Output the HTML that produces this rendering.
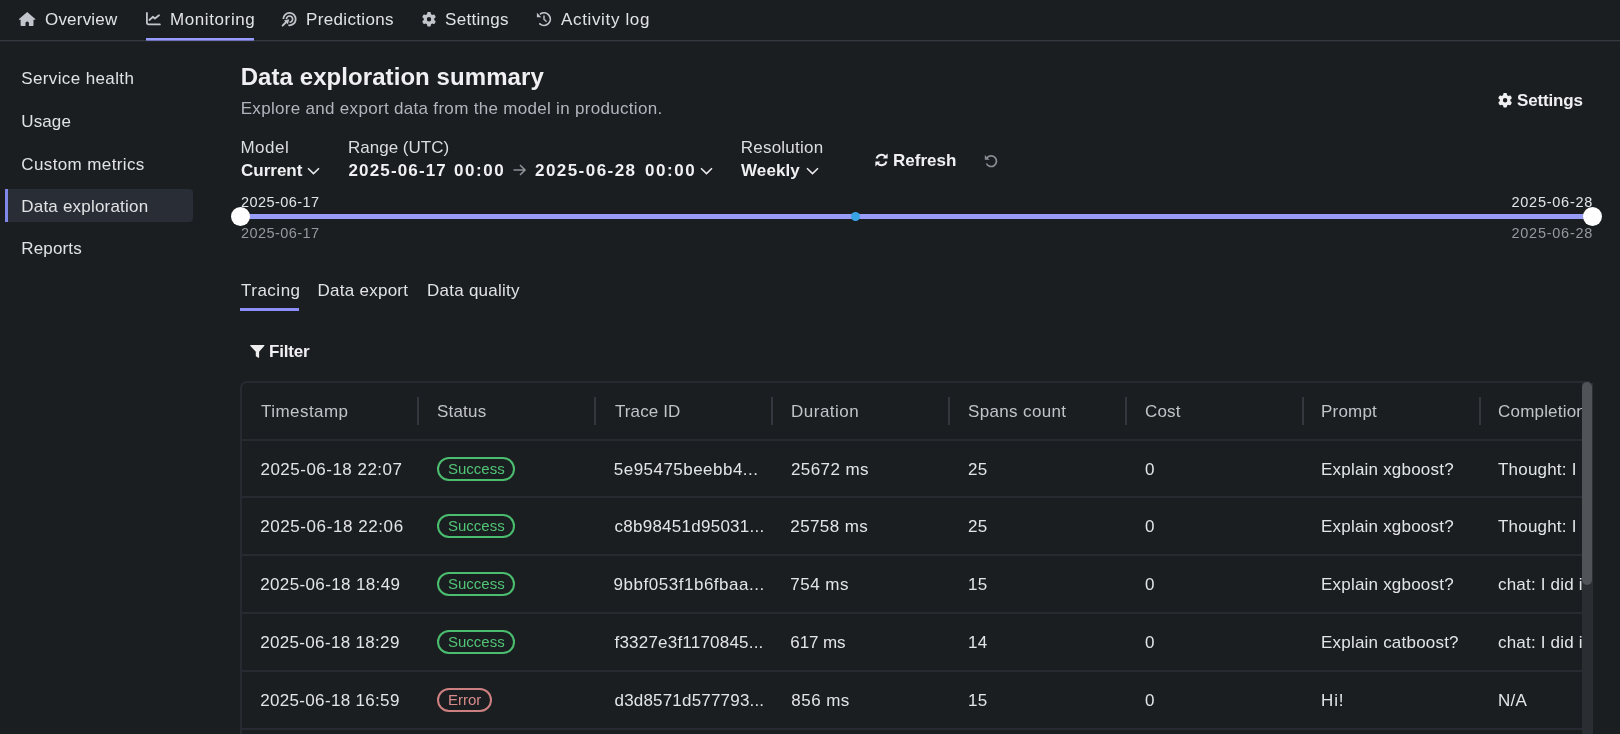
<!DOCTYPE html>
<html><head><meta charset="utf-8">
<style>
*{box-sizing:border-box;margin:0;padding:0}
html,body{width:1620px;height:734px;overflow:hidden;background:#1a1e21;font-family:"Liberation Sans",sans-serif;color:#e6e6e6}
#root{position:absolute;left:0;top:0;width:1620px;height:734px;will-change:transform}
.a{position:absolute;white-space:nowrap;font-size:17px;line-height:20px}
.b{font-weight:700;color:#f0f0f2}
.ic{position:absolute;overflow:visible}
.nt{color:#e1e2e4}
.side{color:#e1e2e4}
.sub{color:#b1b5bd}
.lbl{color:#dcdde0}
.sm{font-size:14.5px;line-height:16px}
.th{color:#c1c3c7}
.td{color:#e3e4e6}
.sep{position:absolute;width:1.5px;height:28px;background:#34383e;top:397px}
.rl{position:absolute;left:241px;width:1341px;height:2px;background:#272b31}
.badge{position:absolute;left:437px;height:24px;border:2px solid #4bbd6e;border-radius:12px;color:#52c476;font-size:15px;line-height:20px;padding:0 0 0 9px;white-space:nowrap}
.badge.err{border-color:#cd8080;color:#d98b8b}
</style></head><body><div id="root">

<div style="position:absolute;left:0;top:40px;width:1620px;height:1px;background:#363a40"></div>
<div style="position:absolute;left:0;top:41px;width:1620px;height:1px;background:#22262b"></div>
<div style="position:absolute;left:146px;top:38px;width:108px;height:2px;background:#979cfb"></div>
<div style="position:absolute;left:146px;top:40px;width:108px;height:1px;background:#6c70b8"></div>
<svg class="ic" style="left:14px;top:8px" width="26" height="22" viewBox="0 0 26 22"><path d="M13.2 3.9 L21.3 11.0 Q21.7 11.6 21.1 11.7 L19.5 11.7 L19.5 17.3 Q19.5 18 18.8 18 L14.9 18 L14.9 15.1 Q14.9 13.4 13.2 13.4 Q11.5 13.4 11.5 15.1 L11.5 18 L7.3 18 Q6.6 18 6.6 17.3 L6.6 11.7 L5.2 11.7 Q4.6 11.6 5.0 11.0 Z" fill="#c2c5cb"/></svg>
<div id="t1" class="a nt" style="left:45px;top:10px;letter-spacing:0.2px;">Overview</div>
<svg class="ic" style="left:142px;top:8px" width="24" height="22" viewBox="0 0 24 22"><path d="M4.9 4.9 V14.6 Q4.9 16.4 6.7 16.4 H17.9" stroke="#c2c5cb" stroke-width="1.8" fill="none" stroke-linecap="round"/><path d="M7.4 12 L10.8 8.8 L12.9 10.5 L17 7.3" stroke="#c2c5cb" stroke-width="1.8" fill="none" stroke-linecap="round" stroke-linejoin="round"/></svg>
<div id="t2" class="a nt" style="left:170px;top:10px;letter-spacing:0.6px;">Monitoring</div>
<svg class="ic" style="left:278px;top:8px" width="22" height="22" viewBox="0 0 22 22"><path d="M5.3 11.1 A6.2 6.2 0 1 1 10.4 17.2" stroke="#c2c5cb" stroke-width="1.8" fill="none"/><path d="M8.45 11.2 A3.1 3.1 0 1 1 11.6 14.2" stroke="#c2c5cb" stroke-width="1.7" fill="none"/><path d="M11.3 11.2 L5.9 12.4 L9.9 16.3 Z" fill="#c2c5cb"/><path d="M8.2 14 L4.6 17.6" stroke="#c2c5cb" stroke-width="1.9" stroke-linecap="round"/></svg>
<div id="t3" class="a nt" style="left:306px;top:10px;letter-spacing:0.35px;">Predictions</div>
<svg class="ic" style="left:421.5px;top:11.8px" width="14" height="14.5" viewBox="0 0 512 512" preserveAspectRatio="none"><path fill="#c2c5cb" d="M495.9 166.6c3.2 8.7.5 18.4-6.4 24.6l-43.3 39.4c1.1 8.3 1.7 16.8 1.7 25.4s-.6 17.1-1.7 25.4l43.3 39.4c6.9 6.2 9.6 15.9 6.4 24.6c-4.4 11.9-9.7 23.3-15.8 34.3l-4.7 8.1c-6.6 11-14 21.4-22.1 31.2c-5.9 7.2-15.7 9.6-24.5 6.8l-55.7-17.7c-13.4 10.3-28.2 18.9-44 25.4l-12.5 57.1c-2 9.1-9 16.3-18.2 17.8c-13.8 2.3-28 3.5-42.5 3.5s-28.7-1.2-42.5-3.5c-9.2-1.5-16.2-8.700-18.2-17.8l-12.5-57.1c-15.8-6.5-30.6-15.1-44-25.4L83.1 425.9c-8.8 2.8-18.6.3-24.5-6.8c-8.1-9.8-15.5-20.2-22.1-31.2l-4.7-8.1c-6.1-11-11.4-22.4-15.8-34.3c-3.2-8.7-.5-18.4 6.4-24.6l43.3-39.4C64.6 273.1 64 264.6 64 256s.6-17.1 1.7-25.4L22.4 191.2c-6.9-6.2-9.6-15.9-6.4-24.6c4.4-11.9 9.7-23.3 15.8-34.3l4.7-8.1c6.6-11 14-21.4 22.1-31.2c5.9-7.2 15.7-9.6 24.5-6.8l55.7 17.7c13.4-10.3 28.2-18.9 44-25.4l12.5-57.1c2-9.1 9-16.3 18.2-17.8C227.3 1.2 241.5 0 256 0s28.7 1.2 42.5 3.5c9.2 1.5 16.2 8.7 18.2 17.8l12.5 57.1c15.8 6.5 30.6 15.1 44 25.4l55.7-17.7c8.8-2.8 18.6-.3 24.5 6.8c8.1 9.8 15.5 20.2 22.1 31.2l4.7 8.1c6.1 11 11.4 22.4 15.8 34.3zM256 336a80 80 0 1 0 0-160 80 80 0 1 0 0 160z"/></svg>
<div id="t4" class="a nt" style="left:445px;top:10px;letter-spacing:0.3px;">Settings</div>
<svg class="ic" style="left:532px;top:8px" width="24" height="22" viewBox="0 0 24 22"><path d="M8.57 5.82 A6.3 6.3 0 1 1 7.87 15.85" stroke="#c2c5cb" stroke-width="1.8" fill="none" stroke-linecap="round"/><path d="M4.9 4.8 L4.9 9.2 L9.3 9.2 Z" fill="#c2c5cb"/><path d="M12 8 V11.2 L14.1 13.3" stroke="#aeb2b9" stroke-width="1.6" fill="none" stroke-linecap="round"/></svg>
<div id="t5" class="a nt" style="left:561px;top:10px;letter-spacing:0.65px;">Activity log</div>
<div style="position:absolute;left:5px;top:189px;width:188px;height:33px;background:#292d35;border-radius:0 4px 4px 0"></div>
<div style="position:absolute;left:5px;top:189px;width:3px;height:33px;background:#8088ea"></div>
<div id="t6" class="a side" style="left:21.2px;top:69px;letter-spacing:0.38px;">Service health</div>
<div id="t7" class="a side" style="left:21.3px;top:112px;letter-spacing:0.1px;">Usage</div>
<div id="t8" class="a side" style="left:21.3px;top:155px;letter-spacing:0.38px;">Custom metrics</div>
<div id="t9" class="a side" style="left:21.3px;top:197px;letter-spacing:0.2px;">Data exploration</div>
<div id="t10" class="a side" style="left:21.3px;top:239px;letter-spacing:0.15px;">Reports</div>
<div id="t11" class="a b" style="left:240.7px;top:63px;letter-spacing:0.07px;font-size:24px;line-height:28px">Data exploration summary</div>
<div id="t12" class="a sub" style="left:240.7px;top:99px;letter-spacing:0.31px;">Explore and export data from the model in production.</div>
<svg class="ic" style="left:1498px;top:92.7px" width="14.2" height="14.6" viewBox="0 0 512 512" preserveAspectRatio="none"><path fill="#f0f0f2" d="M495.9 166.6c3.2 8.7.5 18.4-6.4 24.6l-43.3 39.4c1.1 8.3 1.7 16.8 1.7 25.4s-.6 17.1-1.7 25.4l43.3 39.4c6.9 6.2 9.6 15.9 6.4 24.6c-4.4 11.9-9.7 23.3-15.8 34.3l-4.7 8.1c-6.6 11-14 21.4-22.1 31.2c-5.9 7.2-15.7 9.6-24.5 6.8l-55.7-17.7c-13.4 10.3-28.2 18.9-44 25.4l-12.5 57.1c-2 9.1-9 16.3-18.2 17.8c-13.8 2.3-28 3.5-42.5 3.5s-28.7-1.2-42.5-3.5c-9.2-1.5-16.2-8.700-18.2-17.8l-12.5-57.1c-15.8-6.5-30.6-15.1-44-25.4L83.1 425.9c-8.8 2.8-18.6.3-24.5-6.8c-8.1-9.8-15.5-20.2-22.1-31.2l-4.7-8.1c-6.1-11-11.4-22.4-15.8-34.3c-3.2-8.7-.5-18.4 6.4-24.6l43.3-39.4C64.6 273.1 64 264.6 64 256s.6-17.1 1.7-25.4L22.4 191.2c-6.9-6.2-9.6-15.9-6.4-24.6c4.4-11.9 9.7-23.3 15.8-34.3l4.7-8.1c6.6-11 14-21.4 22.1-31.2c5.9-7.2 15.7-9.6 24.5-6.8l55.7 17.7c13.4-10.3 28.2-18.9 44-25.4l12.5-57.1c2-9.1 9-16.3 18.2-17.8C227.3 1.2 241.5 0 256 0s28.7 1.2 42.5 3.5c9.2 1.5 16.2 8.7 18.2 17.8l12.5 57.1c15.8 6.5 30.6 15.1 44 25.4l55.7-17.7c8.8-2.8 18.6-.3 24.5 6.8c8.1 9.8 15.5 20.2 22.1 31.2l4.7 8.1c6.1 11 11.4 22.4 15.8 34.3zM256 336a80 80 0 1 0 0-160 80 80 0 1 0 0 160z"/></svg>
<div id="t13" class="a b" style="left:1517px;top:91px;letter-spacing:-0.15px;">Settings</div>
<div id="t14" class="a lbl" style="left:240.4px;top:138px;letter-spacing:0.55px;">Model</div>
<div id="t15" class="a b" style="left:241px;top:161px;letter-spacing:0px;">Current</div>
<svg class="ic" style="left:307px;top:167px" width="13" height="8" viewBox="0 0 13 8"><path d="M1 1.2 L6.5 6.6 L12 1.2" stroke="#ececee" stroke-width="1.5" fill="none"/></svg>
<div id="t16" class="a lbl" style="left:348px;top:138px;letter-spacing:0px;">Range (UTC)</div>
<div id="t17" class="a b" style="left:348.5px;top:161px;letter-spacing:1.15px;">2025-06-17</div>
<div id="t18" class="a b" style="left:454px;top:161px;letter-spacing:1.55px;">00:00</div>
<svg class="ic" style="left:513px;top:164px" width="13" height="12" viewBox="0 0 13 12"><path d="M0.5 6 H12 M7 1 L12 6 L7 11" stroke="#8c9097" stroke-width="1.6" fill="none"/></svg>
<div id="t19" class="a b" style="left:535px;top:161px;letter-spacing:1.45px;">2025-06-28</div>
<div id="t20" class="a b" style="left:645px;top:161px;letter-spacing:1.55px;">00:00</div>
<svg class="ic" style="left:700px;top:167px" width="13" height="8" viewBox="0 0 13 8"><path d="M1 1.2 L6.5 6.6 L12 1.2" stroke="#ececee" stroke-width="1.5" fill="none"/></svg>
<div id="t21" class="a lbl" style="left:740.8px;top:138px;letter-spacing:0.22px;">Resolution</div>
<div id="t22" class="a b" style="left:741px;top:161px;letter-spacing:0.1px;">Weekly</div>
<svg class="ic" style="left:806px;top:167px" width="13" height="8" viewBox="0 0 13 8"><path d="M1 1.2 L6.5 6.6 L12 1.2" stroke="#ececee" stroke-width="1.5" fill="none"/></svg>
<svg class="ic" style="left:874px;top:153px" width="15" height="14" viewBox="0 0 15 14"><path d="M2.6 5.6 A5 5 0 0 1 11.3 3.6" stroke="#f0f0f2" stroke-width="2" fill="none"/><path d="M13.6 0.6 V5.6 H8.6 Z" fill="#f0f0f2"/><path d="M12.4 8.4 A5 5 0 0 1 3.7 10.4" stroke="#f0f0f2" stroke-width="2" fill="none"/><path d="M1.4 13.4 V8.4 H6.4 Z" fill="#f0f0f2"/></svg>
<div id="t23" class="a b" style="left:893px;top:151px;letter-spacing:0.0px;">Refresh</div>
<svg class="ic" style="left:984px;top:154px" width="14" height="14" viewBox="0 0 14 14"><path d="M2.8 4.2 A5.3 5.3 0 1 1 2.4 9.5" stroke="#8a8e95" stroke-width="1.7" fill="none"/><path d="M0.8 1 V5.8 H5.6 Z" fill="#8a8e95"/></svg>
<div style="position:absolute;left:240px;top:214px;width:1353px;height:5px;background:#979cf6"></div>
<div style="position:absolute;left:231px;top:207px;width:19px;height:19px;background:#fff;border-radius:50%"></div>
<div style="position:absolute;left:1583px;top:207px;width:19px;height:19px;background:#fff;border-radius:50%"></div>
<div style="position:absolute;left:850.5px;top:211.5px;width:9.5px;height:9.5px;background:#3aa3e6;border-radius:50%"></div>
<div id="t24" class="a sm" style="left:241px;top:194px;letter-spacing:0.42px;color:#e3e4e6">2025-06-17</div>
<div id="t25" class="a sm" style="left:241px;top:225px;letter-spacing:0.42px;color:#95989d">2025-06-17</div>
<div id="t26" class="a sm" style="left:1511.5px;top:194px;letter-spacing:0.74px;color:#e3e4e6">2025-06-28</div>
<div id="t27" class="a sm" style="left:1511.5px;top:225px;letter-spacing:0.74px;color:#95989d">2025-06-28</div>
<div id="t28" class="a side" style="left:241px;top:281px;letter-spacing:0.5px;">Tracing</div>
<div id="t29" class="a side" style="left:317.6px;top:281px;letter-spacing:0.25px;">Data export</div>
<div id="t30" class="a side" style="left:427px;top:281px;letter-spacing:0.25px;">Data quality</div>
<div style="position:absolute;left:240px;top:308px;width:59px;height:3px;background:#8b8ff7"></div>
<svg class="ic" style="left:249.6px;top:345px" width="15" height="13" viewBox="0 0 15 13"><path d="M0.7 0 H13.9 Q14.9 0 14.2 0.9 L9.1 6.8 V12.2 Q9.1 13 8.4 12.7 L6.3 11.5 Q5.8 11.2 5.8 10.7 V6.8 L0.4 0.9 Q-0.2 0 0.7 0 Z" fill="#ededed"/></svg>
<div id="t31" class="a b" style="left:269px;top:342px;letter-spacing:-0.2px;">Filter</div>
<div style="position:absolute;left:240px;top:381px;width:1350px;height:420px;border:2px solid #272b31;border-right:none;border-radius:7px 0 0 7px"></div>
<div class="sep" style="left:417px"></div>
<div class="sep" style="left:594px"></div>
<div class="sep" style="left:771px"></div>
<div class="sep" style="left:948px"></div>
<div class="sep" style="left:1125px"></div>
<div class="sep" style="left:1302px"></div>
<div class="sep" style="left:1479px"></div>
<div class="rl" style="top:439px"></div>
<div class="rl" style="top:496px"></div>
<div class="rl" style="top:554px"></div>
<div class="rl" style="top:612px"></div>
<div class="rl" style="top:670px"></div>
<div class="rl" style="top:728px"></div>
<div id="t32" class="a th" style="left:261px;top:402px;letter-spacing:0.45px;">Timestamp</div>
<div id="t33" class="a th" style="left:437px;top:402px;letter-spacing:0.2px;">Status</div>
<div id="t34" class="a th" style="left:615px;top:402px;letter-spacing:0.1px;">Trace ID</div>
<div id="t35" class="a th" style="left:791px;top:402px;letter-spacing:0.5px;">Duration</div>
<div id="t36" class="a th" style="left:968px;top:402px;letter-spacing:0.35px;">Spans count</div>
<div id="t37" class="a th" style="left:1145px;top:402px;letter-spacing:0.15px;">Cost</div>
<div id="t38" class="a th" style="left:1321px;top:402px;letter-spacing:0.2px;">Prompt</div>
<div id="t39" class="a th" style="left:1498px;top:402px;letter-spacing:0.2px;">Completion</div>
<div id="t40" class="a td" style="left:260.5px;top:460px;letter-spacing:0.48px;">2025-06-18 22:07</div>
<div class="badge" style="top:457px;width:78px;letter-spacing:0px">Success</div>
<div id="t41" class="a td" style="left:613.8px;top:460px;letter-spacing:0.47px;">5e95475beebb4...</div>
<div id="t42" class="a td" style="left:790.9px;top:460px;letter-spacing:0.43px;">25672 ms</div>
<div id="t43" class="a td" style="left:968px;top:460px;letter-spacing:0.2px;">25</div>
<div id="t44" class="a td" style="left:1145px;top:460px;letter-spacing:0px;">0</div>
<div id="t45" class="a td" style="left:1321px;top:460px;letter-spacing:0.21px;">Explain xgboost?</div>
<div id="t46" class="a td" style="left:1498px;top:460px;letter-spacing:0.2px;">Thought: I</div>
<div id="t47" class="a td" style="left:260.2px;top:517px;letter-spacing:0.58px;">2025-06-18 22:06</div>
<div class="badge" style="top:514px;width:78px;letter-spacing:0px">Success</div>
<div id="t48" class="a td" style="left:614.5px;top:517px;letter-spacing:0.26px;">c8b98451d95031...</div>
<div id="t49" class="a td" style="left:790.3px;top:517px;letter-spacing:0.4px;">25758 ms</div>
<div id="t50" class="a td" style="left:968px;top:517px;letter-spacing:0.2px;">25</div>
<div id="t51" class="a td" style="left:1145px;top:517px;letter-spacing:0px;">0</div>
<div id="t52" class="a td" style="left:1321px;top:517px;letter-spacing:0.21px;">Explain xgboost?</div>
<div id="t53" class="a td" style="left:1498px;top:517px;letter-spacing:0.2px;">Thought: I</div>
<div id="t54" class="a td" style="left:260.2px;top:575px;letter-spacing:0.37px;">2025-06-18 18:49</div>
<div class="badge" style="top:572px;width:78px;letter-spacing:0px">Success</div>
<div id="t55" class="a td" style="left:613.5px;top:575px;letter-spacing:0.53px;">9bbf053f1b6fbaa...</div>
<div id="t56" class="a td" style="left:790.3px;top:575px;letter-spacing:0.48px;">754 ms</div>
<div id="t57" class="a td" style="left:968px;top:575px;letter-spacing:0.2px;">15</div>
<div id="t58" class="a td" style="left:1145px;top:575px;letter-spacing:0px;">0</div>
<div id="t59" class="a td" style="left:1321px;top:575px;letter-spacing:0.21px;">Explain xgboost?</div>
<div id="t60" class="a td" style="left:1498px;top:575px;letter-spacing:0.2px;">chat: I did i</div>
<div id="t61" class="a td" style="left:260.2px;top:633px;letter-spacing:0.33px;">2025-06-18 18:29</div>
<div class="badge" style="top:630px;width:78px;letter-spacing:0px">Success</div>
<div id="t62" class="a td" style="left:614.5px;top:633px;letter-spacing:0.21px;">f3327e3f1170845...</div>
<div id="t63" class="a td" style="left:790.3px;top:633px;letter-spacing:-0.1px;">617 ms</div>
<div id="t64" class="a td" style="left:968px;top:633px;letter-spacing:0.2px;">14</div>
<div id="t65" class="a td" style="left:1145px;top:633px;letter-spacing:0px;">0</div>
<div id="t66" class="a td" style="left:1321px;top:633px;letter-spacing:0.21px;">Explain catboost?</div>
<div id="t67" class="a td" style="left:1498px;top:633px;letter-spacing:0.2px;">chat: I did i</div>
<div id="t68" class="a td" style="left:260.2px;top:691px;letter-spacing:0.33px;">2025-06-18 16:59</div>
<div class="badge err" style="top:688px;width:55px;letter-spacing:0px">Error</div>
<div id="t69" class="a td" style="left:614.5px;top:691px;letter-spacing:0.19px;">d3d8571d577793...</div>
<div id="t70" class="a td" style="left:791.3px;top:691px;letter-spacing:0.46px;">856 ms</div>
<div id="t71" class="a td" style="left:968px;top:691px;letter-spacing:0.2px;">15</div>
<div id="t72" class="a td" style="left:1145px;top:691px;letter-spacing:0px;">0</div>
<div id="t73" class="a td" style="left:1321px;top:691px;letter-spacing:0.9px;">Hi!</div>
<div id="t74" class="a td" style="left:1498px;top:691px;letter-spacing:0.2px;">N/A</div>
<div style="position:absolute;left:1582px;top:383px;width:11px;height:360px;background:#2a2d31"></div>
<div style="position:absolute;left:1582px;top:382px;width:10px;height:203px;background:#505458;border-radius:5px"></div>
<div style="position:absolute;left:1593px;top:370px;width:30px;height:380px;background:#1a1e21"></div>
</div></body></html>
